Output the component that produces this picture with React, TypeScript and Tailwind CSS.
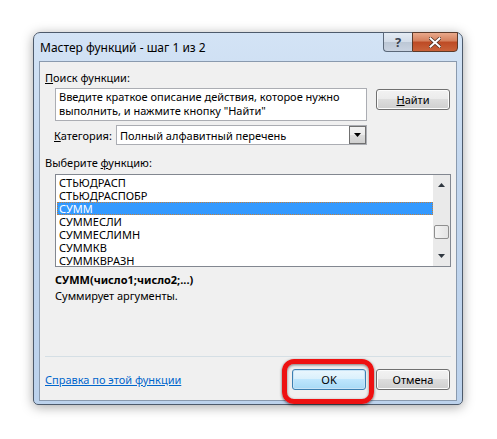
import { useState } from "react";

const functions = [
  "СТЬЮДРАСП",
  "СТЬЮДРАСПОБР",
  "СУММ",
  "СУММЕСЛИ",
  "СУММЕСЛИМН",
  "СУММКВ",
  "СУММКВРАЗН",
];

function WinButton({ children, primary }: { children: React.ReactNode; primary?: boolean }) {
  return (
    <button
      className={
        "w-[74px] h-[21px] rounded-[3px] border text-[11px] leading-none text-black " +
        (primary
          ? "border-[#3c7fb1] bg-[linear-gradient(#eaf6fd_0%,#d9f0fc_49%,#bee6fd_50%,#a7d9f5_100%)] shadow-[inset_0_0_0_1px_#c8e4f6]"
          : "border-[#707070] bg-[linear-gradient(#f2f2f2_0%,#ebebeb_49%,#dddddd_50%,#cfcfcf_100%)] shadow-[inset_0_0_0_1px_#fcfcfc]")
      }
    >
      {children}
    </button>
  );
}

export default function App() {
  const [selected, setSelected] = useState("СУММ");

  return (
    <div
      className="w-[497px] h-[439px] bg-white overflow-hidden pt-[32px] pl-[33px]"
      style={{ fontFamily: '"Segoe UI", "Noto Sans", "Open Sans", sans-serif' }}
    >
      <div className="relative w-[430px] h-[373px] rounded-t-[7px] rounded-b-[5px] border border-[#4d5a6b] bg-[linear-gradient(#d3e3f5_0%,#c2d6ee_40%,#bcd2ec_100%)] shadow-[0_2px_12px_rgba(0,0,0,0.35)]">
        {/* title bar */}
        <div className="flex h-[28px] items-center pl-[6px]">
          <span className="text-[12px] text-black pt-[2px]">Мастер функций - шаг 1 из 2</span>
        </div>
        <div className="absolute -top-px right-[4px] flex h-[20px]">
          <div className="flex w-[29px] items-center justify-center rounded-bl-[4px] border border-r-0 border-[#5b6879] bg-[linear-gradient(#e4ecf5_0%,#d3dce8_50%,#bcc7d5_51%,#c9d3e1_100%)]">
            <span className="text-[13px] font-bold leading-none text-[#3a4350]">?</span>
          </div>
          <div className="flex w-[46px] items-center justify-center rounded-br-[4px] border border-[#5b3a2a] bg-[linear-gradient(#e9a98b_0%,#d47f5c_45%,#bd4a24_50%,#c9623a_100%)]">
            <svg width="12" height="11" viewBox="0 0 12 11">
              <path d="M1.5 1.5 L10.5 9.5 M10.5 1.5 L1.5 9.5" stroke="#4a2a1c" strokeWidth="3.4" strokeLinecap="square" />
              <path d="M1.5 1.5 L10.5 9.5 M10.5 1.5 L1.5 9.5" stroke="#ffffff" strokeWidth="2" strokeLinecap="square" />
            </svg>
          </div>
        </div>

        {/* client area */}
        <div className="ml-[5px] w-[418px] h-[340px] border border-[#8a9aae] bg-[#f0f0f0] text-[11px] leading-[15px] text-black">
          <div className="pl-[5px] pt-[8px]">
            <u>П</u>оиск функции:
          </div>

          <div className="mt-[3px] ml-[15px] flex gap-[9px]">
            <div className="w-[312px] h-[33px] border border-[#abadb3] bg-white pl-[3px] pt-[1px] leading-[14px]">
              Введите краткое описание действия, которое нужно
              <br />
              выполнить, и нажмите кнопку "Найти"
            </div>
            <div className="mt-[1px]">
              <WinButton>
                <u>Н</u>айти
              </WinButton>
            </div>
          </div>

          <div className="mt-[4px] ml-[14px] flex items-center">
            <span className="w-[62px]">
              <u>К</u>атегория:
            </span>
            <div className="flex w-[251px] h-[20px] items-center border border-[#abadb3] bg-white">
              <span className="flex-1 pl-[3px]">Полный алфавитный перечень</span>
              <div className="flex h-[18px] w-[17px] items-center justify-center border border-[#707070] bg-[linear-gradient(#f2f2f2_0%,#ebebeb_49%,#dddddd_50%,#cfcfcf_100%)]">
                <svg width="7" height="4" viewBox="0 0 7 4">
                  <path d="M0 0 H7 L3.5 4 Z" fill="#000" />
                </svg>
              </div>
            </div>
          </div>

          <div className="mt-[10px] pl-[5px]">
            Выберите <u>ф</u>ункцию:
          </div>

          <div className="mt-[4px] ml-[15px] flex w-[396px] h-[93px] border border-[#828790] bg-white">
            <ul className="flex-1 pl-[1px] pt-[1px]">
              {functions.map((f) => (
                <li
                  key={f}
                  onClick={() => setSelected(f)}
                  className={
                    "h-[13px] pl-[2px] leading-[13px] " +
                    (f === selected
                      ? "bg-[#3399ff] text-white outline outline-1 outline-dotted outline-[#c08040] -outline-offset-1"
                      : "")
                  }
                >
                  {f}
                </li>
              ))}
            </ul>
            <div className="flex w-[17px] flex-col items-center bg-[#eaeaea] py-[8px]">
              <svg width="7" height="4" viewBox="0 0 7 4">
                <path d="M0 4 H7 L3.5 0 Z" fill="#303840" />
              </svg>
              <div className="mt-[38px] h-[14px] w-[15px] rounded-[2px] border border-[#8f8f8f] bg-[linear-gradient(90deg,#f4f4f4,#e4e4e4)]" />
              <div className="flex-1" />
              <svg width="7" height="4" viewBox="0 0 7 4">
                <path d="M0 0 H7 L3.5 4 Z" fill="#303840" />
              </svg>
            </div>
          </div>

          <div className="mt-[5px] ml-[15px] font-bold">СУММ(число1;число2;...)</div>
          <div className="mt-[1px] ml-[15px]">Суммирует аргументы.</div>

          <div className="mt-[53px] ml-[5px] w-[406px] border-t border-[#d5dfe5]" />

          <div className="mt-[12px] flex items-center pl-[5px]">
            <a href="#" className="text-[#0066cc] underline">
              Справка по этой функции
            </a>
            <div className="flex-1" />
            <div className="relative mr-[10px]">
              <WinButton primary>OK</WinButton>
              <div className="pointer-events-none absolute -left-[10px] -right-[8px] -top-[10px] -bottom-[14px] rounded-[12px] border-[5px] border-[#ee1111] shadow-[0_1px_3px_rgba(0,0,0,0.6),inset_0_1px_3px_rgba(0,0,0,0.5)]" />
            </div>
            <div className="mr-[6px]">
              <WinButton>Отмена</WinButton>
            </div>
          </div>
        </div>
      </div>
    </div>
  );
}
